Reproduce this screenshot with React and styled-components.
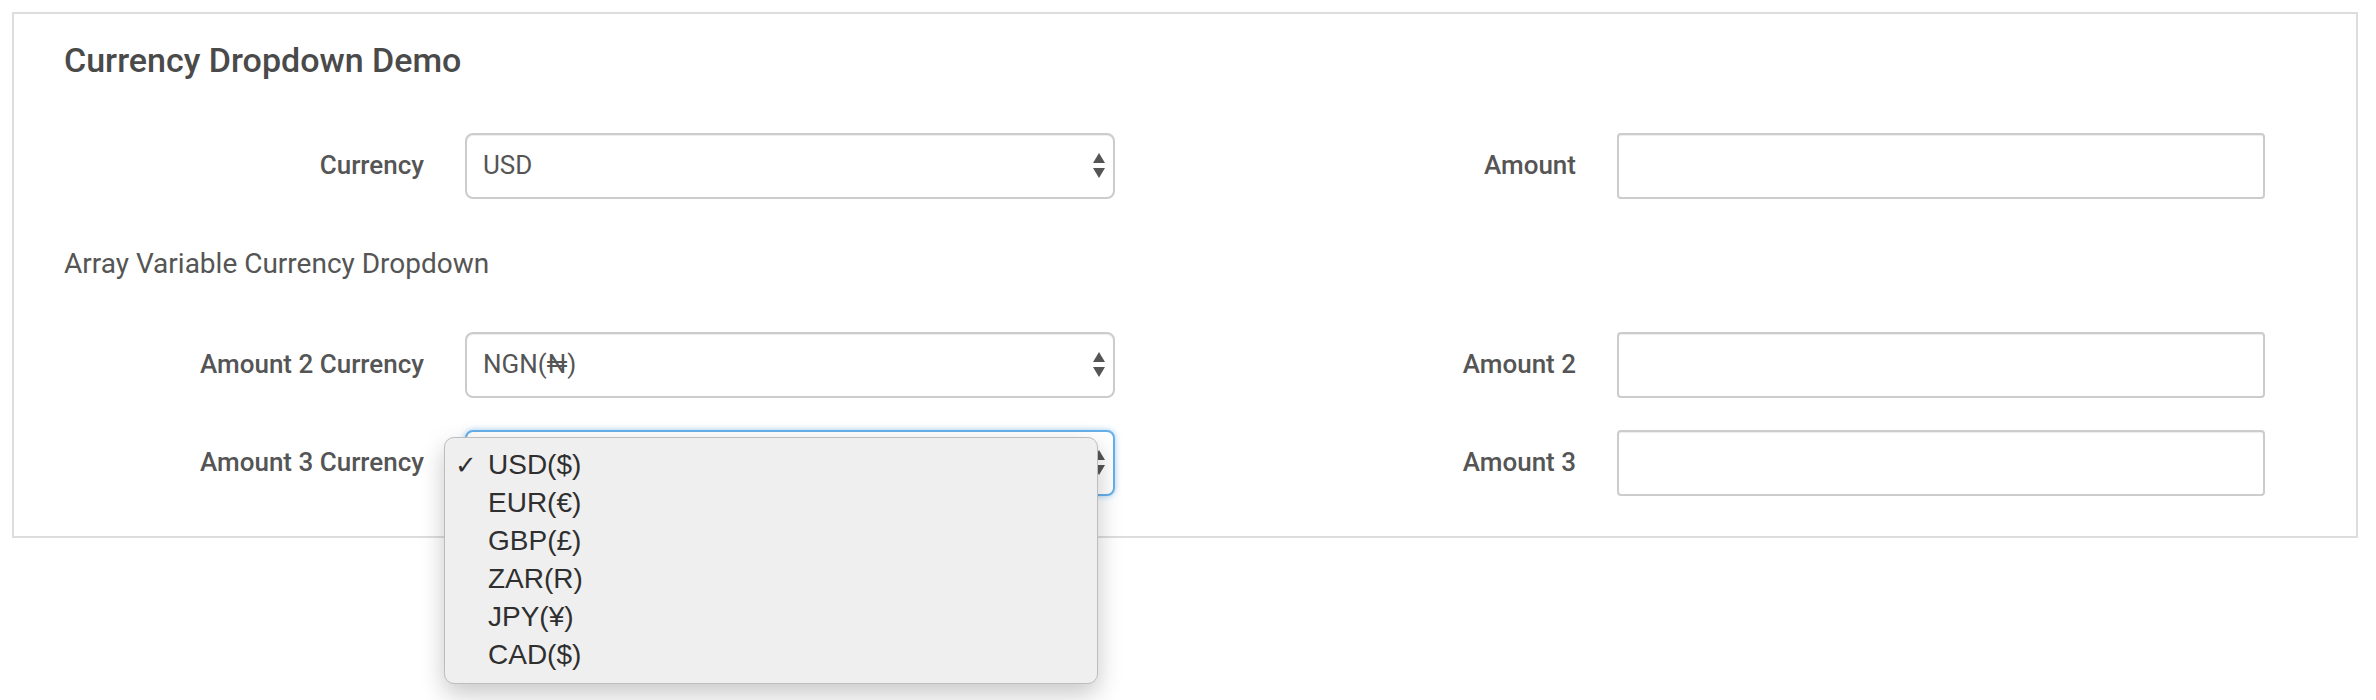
import React from 'react'
import styled, { createGlobalStyle } from 'styled-components'

const GlobalStyle = createGlobalStyle`
    html, body {
        margin: 0;
        background: #ffffff;
        font-family: Roboto, "Liberation Sans", sans-serif;
    }
`

const currencies = ['USD($)', 'EUR(€)', 'GBP(£)', 'ZAR(R)', 'JPY(¥)', 'CAD($)']

const Arrows = () => (
    <svg width="12" height="26" viewBox="0 0 12 26">
        <path d="M6 0 L12 10 L0 10 Z" fill="#555" />
        <path d="M0 15 L12 15 L6 25 Z" fill="#555" />
    </svg>
)

const SelectField = ({ value, focused, open }) => (
    <SelectWrap>
        <SelectBox focused={focused}>
            <span>{value}</span>
        </SelectBox>
        <ArrowSlot>
            <Arrows />
        </ArrowSlot>
        {open && (
            <Menu>
                {currencies.map((c) => (
                    <MenuItem key={c}>
                        <Check>{c === value ? '✓' : ''}</Check>
                        {c}
                    </MenuItem>
                ))}
            </Menu>
        )}
    </SelectWrap>
)

const App = () => {
    return (
        <Page>
            <GlobalStyle />
            <Panel>
                <Title>Currency Dropdown Demo</Title>
                <Row>
                    <Label>Currency</Label>
                    <SelectField value="USD" />
                    <Label>Amount</Label>
                    <Input />
                </Row>
                <SubHeading>Array Variable Currency Dropdown</SubHeading>
                <Row>
                    <Label>Amount 2 Currency</Label>
                    <SelectField value="NGN(₦)" />
                    <Label>Amount 2</Label>
                    <Input />
                </Row>
                <Row tight>
                    <Label>Amount 3 Currency</Label>
                    <SelectField value="USD($)" focused open />
                    <Label>Amount 3</Label>
                    <Input />
                </Row>
            </Panel>
        </Page>
    )
}

const Page = styled.div`
    box-sizing: border-box;
    min-height: 700px;
    padding: 12px 18px 0 12px;
`
const Panel = styled.div`
    border: 2px solid #dddddd;
    padding: 26px 50px 40px 50px;
    color: #555555;
`
const Title = styled.h1`
    margin: 0 0 53px 0;
    font-size: 34px;
    line-height: 40px;
    font-weight: 500;
    color: #4a4a4a;
`
const SubHeading = styled.p`
    margin: 49px 0 52px 0;
    font-size: 28px;
    line-height: 32px;
    font-weight: 400;
    color: #555555;
`
const Row = styled.div`
    display: grid;
    grid-template-columns: 401px 650px 502px 648px;
    align-items: center;
    margin-top: ${(p) => (p.tight ? '32px' : '0')};
`
const Label = styled.label`
    text-align: right;
    padding-right: 41px;
    padding-bottom: 3px;
    font-size: 26px;
    font-weight: 500;
    color: #555555;
`
const SelectWrap = styled.div`
    position: relative;
    height: 66px;
`
const SelectBox = styled.div`
    box-sizing: border-box;
    height: 66px;
    display: flex;
    align-items: center;
    padding: 0 16px 2px 16px;
    border: 2px solid ${(p) => (p.focused ? '#66afe9' : '#cccccc')};
    border-radius: 8px;
    background: #ffffff;
    font-size: 26px;
    color: #555555;
    box-shadow: ${(p) =>
        p.focused
            ? '0 0 6px rgba(102, 175, 233, 0.6)'
            : 'inset 0 1px 1px rgba(0, 0, 0, 0.075)'};
`
const ArrowSlot = styled.div`
    position: absolute;
    right: 10px;
    top: 20px;
    display: flex;
`
const Input = styled.input`
    box-sizing: border-box;
    height: 66px;
    width: 648px;
    border: 2px solid #cccccc;
    border-radius: 4px;
    box-shadow: inset 0 1px 1px rgba(0, 0, 0, 0.075);
    background: #ffffff;
    font-size: 26px;
    outline: none;
`
const Menu = styled.ul`
    position: absolute;
    left: -21px;
    top: 7px;
    width: 654px;
    box-sizing: border-box;
    margin: 0;
    padding: 8px 0 9px 0;
    list-style: none;
    background: #efefef;
    border: 1px solid #bdbdbd;
    border-radius: 10px;
    box-shadow: 0 10px 24px rgba(0, 0, 0, 0.22);
    z-index: 5;
`
const MenuItem = styled.li`
    display: flex;
    align-items: center;
    height: 38px;
    font-family: "Liberation Sans", Arial, sans-serif;
    font-size: 28px;
    color: #2f2f2f;
`
const Check = styled.span`
    width: 43px;
    padding-left: 10px;
    box-sizing: border-box;
    font-size: 26px;
    font-weight: 700;
    font-family: "DejaVu Sans", sans-serif;
`

export default App
